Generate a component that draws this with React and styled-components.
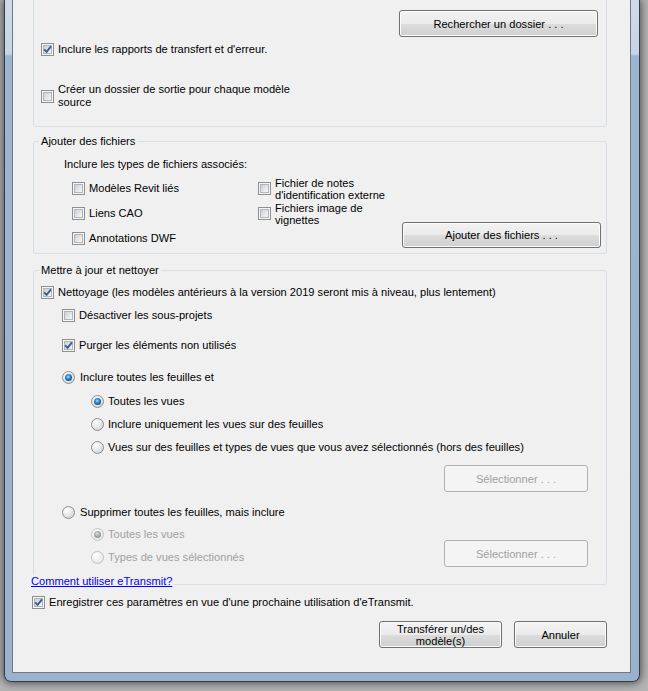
import React from 'react'
import styled, { createGlobalStyle } from 'styled-components'

const GlobalStyle = createGlobalStyle`
  html, body {
    margin: 0;
    padding: 0;
  }
  body {
    background: #b4b4b4;
    font-family: "Liberation Sans", Arial, sans-serif;
    font-size: 11.1px;
    color: #000;
  }
`;

const Page = styled.div`
  width: 648px;
  height: 691px;
  box-sizing: border-box;
  padding-left: 4px;
  overflow: hidden;
`;

const Window = styled.div`
  width: 636px;
  height: 682px;
  box-sizing: border-box;
  border: 1px solid #343d47;
  border-top: none;
  border-radius: 0 0 7px 7px;
  padding: 0 8px 8px 7px;
  background: linear-gradient(#cfdbe9 0, #c6d4e5 54px, #9cb4d0 56px, #9ab2ce 100%);
  box-shadow: 0 0 8px 1px rgba(0, 0, 0, 0.6);
`;

const Client = styled.div`
  height: 673px;
  box-sizing: border-box;
  border: 1px solid #6f7a86;
  border-top: none;
  background: #f0f0f0;
  padding: 0 23px 0 20px;
  display: flex;
  flex-direction: column;
`;

const TopGroup = styled.div`
  border: 1px solid #d5dfe5;
  border-top: none;
  border-radius: 0 0 3px 3px;
  padding: 0 8px 17px 7px;
  display: flex;
  flex-direction: column;
`;

const Group = styled.fieldset`
  margin: ${p => p.$top}px 0 0;
  padding: 0 ${p => p.$padRight || 0}px ${p => p.$padBottom}px 0;
  border: 1px solid #d5dfe5;
  border-radius: 3px;
  min-width: 0;
  display: flex;
  flex-direction: column;
`;

const Legend = styled.legend`
  margin-left: 5px;
  padding: 0 2px;
  line-height: 13px;
`;

const Caption = styled.div`
  margin: 10px 0 0 30px;
  line-height: 13px;
`;

const OptionRow = styled.div`
  display: flex;
  align-items: center;
  min-height: 13px;
  margin: ${p => p.$top || 0}px 0 0 ${p => p.$indent || 0}px;
  line-height: 13px;
`;

const OptionColumn = styled.div`
  display: flex;
  flex-direction: column;
  margin-left: ${p => p.$indent}px;
`;

const Text = styled.span`
  margin-left: ${p => p.$gap || 4}px;
  line-height: ${p => (p.$tight ? 12 : 13)}px;
  color: ${p => (p.$disabled ? '#a0a0a0' : '#000')};
  white-space: nowrap;
`;

const Box = styled.span`
  flex: none;
  position: relative;
  width: 13px;
  height: 13px;
  box-sizing: border-box;
  border: 1px solid #8e8f8f;
  background: #f6f6f6;
  &::before {
    content: "";
    position: absolute;
    inset: 1px;
    border: 1px solid #b0b5bb;
    background: linear-gradient(135deg, #cbcfd4 0%, #e6e8eb 60%, #f7f7f7 100%);
  }
  svg {
    position: absolute;
    left: 0;
    top: 0;
  }
`;

const RadioDot = styled.span`
  flex: none;
  position: relative;
  width: 13px;
  height: 13px;
  box-sizing: border-box;
  border-radius: 50%;
  border: 1px solid ${p => (p.$disabled ? '#bfc1c3' : '#8e8f8f')};
  background: ${p =>
    p.$disabled
      ? 'radial-gradient(circle at 35% 30%, #ffffff 0, #f0f0f0 50%, #e0e1e2 100%)'
      : 'radial-gradient(circle at 35% 30%, #ffffff 0, #e8e9ea 45%, #c6c9cc 100%)'};
  &::after {
    display: ${p => (p.$checked ? 'block' : 'none')};
    content: "";
    position: absolute;
    left: 2px;
    top: 2px;
    width: 7px;
    height: 7px;
    border-radius: 50%;
    background: ${p =>
      p.$disabled
        ? 'radial-gradient(circle at 45% 40%, #e0e0e0 0, #a3a3a3 50%, #7c7c7c 100%)'
        : 'radial-gradient(circle at 45% 40%, #a6e4ff 0, #2f8fd8 35%, #175285 70%, #0c2c4a 100%)'};
  }
`;

const ButtonRow = styled.div`
  display: flex;
  justify-content: flex-end;
  margin-top: ${p => p.$top}px;
  padding-right: ${p => p.$right || 0}px;
`;

const SplitRow = styled.div`
  display: flex;
  justify-content: space-between;
  margin-top: ${p => p.$top}px;
  padding-right: ${p => p.$right || 0}px;
`;

const Button = styled.button`
  flex: none;
  width: ${p => p.$w}px;
  height: ${p => p.$h}px;
  box-sizing: border-box;
  margin: ${p => p.$mt || 0}px 0 ${p => p.$mb || 0}px ${p => (p.$auto ? 'auto' : '0')};
  padding: 0;
  font: inherit;
  line-height: 12px;
  color: #000;
  border: 1px solid #707070;
  border-radius: 3px;
  background: linear-gradient(#f2f2f2 0%, #ebebeb 50%, #dddddd 50%, #cfcfcf 100%);
  box-shadow: inset 0 0 0 1px #fcfcfc;
  &:disabled {
    border-color: #adb2b5;
    background: #f4f4f4;
    color: #a0a0a0;
    box-shadow: none;
  }
`;

const FilesRow = styled.div`
  display: flex;
  align-items: flex-end;
  margin-top: 5px;
`;

const FileGrid = styled.div`
  display: grid;
  grid-auto-flow: column;
  grid-template-rows: repeat(3, 25px);
  grid-template-columns: 186px auto;
  margin-left: 38px;
`;

const FileCell = styled.div`
  display: flex;
  align-items: center;
`;

const HelpLink = styled.a`
  align-self: flex-start;
  position: relative;
  margin: -10px 0 0 -2px;
  padding-right: 2px;
  line-height: 13px;
  color: #0000ff;
  text-decoration: underline;
  background: #f0f0f0;
  cursor: pointer;
`;

const Footer = styled.div`
  display: flex;
  justify-content: flex-end;
  gap: 12px;
  margin-top: 12px;
`;

const Checkbox = ({ checked }) => (
  <Box>
    {checked && (
      <svg width="11" height="11" viewBox="0 0 11 11">
        <path d="M2.2 5.4 L4.6 7.9 L9 2.3" fill="none" stroke="#3c5b91" strokeWidth="1.9" />
      </svg>
    )}
  </Box>
);

const Radio = ({ checked, disabled }) => <RadioDot $checked={checked} $disabled={disabled} />;

const App = () => {
  return (
    <>
      <GlobalStyle />
      <Page>
        <Window>
          <Client>
            <TopGroup>
              <ButtonRow $top={10}>
                <Button $w={199} $h={27}>Rechercher un dossier . . .</Button>
              </ButtonRow>
              <OptionRow $top={6}>
                <Checkbox checked />
                <Text>Inclure les rapports de transfert et d'erreur.</Text>
              </OptionRow>
              <OptionRow $top={27}>
                <Checkbox />
                <Text>Créer un dossier de sortie pour chaque modèle<br />source</Text>
              </OptionRow>
            </TopGroup>

            <Group $top={8} $padRight={5} $padBottom={2}>
              <Legend>Ajouter des fichiers</Legend>
              <Caption>Inclure les types de fichiers associés:</Caption>
              <FilesRow>
                <FileGrid>
                  <FileCell><Checkbox /><Text>Modèles Revit liés</Text></FileCell>
                  <FileCell><Checkbox /><Text>Liens CAO</Text></FileCell>
                  <FileCell><Checkbox /><Text>Annotations DWF</Text></FileCell>
                  <FileCell><Checkbox /><Text $tight>Fichier de notes<br />d'identification externe</Text></FileCell>
                  <FileCell><Checkbox /><Text $tight>Fichiers image de<br />vignettes</Text></FileCell>
                </FileGrid>
                <Button $w={199} $h={26} $mb={3} $auto>Ajouter des fichiers . . .</Button>
              </FilesRow>
            </Group>

            <Group $top={10} $padBottom={17}>
              <Legend>Mettre à jour et nettoyer</Legend>
              <OptionRow $top={9} $indent={7}>
                <Checkbox checked />
                <Text>Nettoyage (les modèles antérieurs à la version 2019 seront mis à niveau, plus lentement)</Text>
              </OptionRow>
              <OptionRow $top={10} $indent={28}>
                <Checkbox />
                <Text>Désactiver les sous-projets</Text>
              </OptionRow>
              <OptionRow $top={17} $indent={28}>
                <Checkbox checked />
                <Text>Purger les éléments non utilisés</Text>
              </OptionRow>
              <OptionRow $top={19} $indent={28}>
                <Radio checked />
                <Text $gap={5}>Inclure toutes les feuilles et</Text>
              </OptionRow>
              <OptionRow $top={11} $indent={57}>
                <Radio checked />
                <Text $gap={4}>Toutes les vues</Text>
              </OptionRow>
              <OptionRow $top={10} $indent={57}>
                <Radio />
                <Text $gap={4}>Inclure uniquement les vues sur des feuilles</Text>
              </OptionRow>
              <OptionRow $top={10} $indent={57}>
                <Radio />
                <Text $gap={4}>Vues sur des feuilles et types de vues que vous avez sélectionnés (hors des feuilles)</Text>
              </OptionRow>
              <ButtonRow $top={11} $right={18}>
                <Button $w={144} $h={27} disabled>Sélectionner . . .</Button>
              </ButtonRow>
              <OptionRow $top={14} $indent={28}>
                <Radio />
                <Text $gap={5}>Supprimer toutes les feuilles, mais inclure</Text>
              </OptionRow>
              <SplitRow $top={9} $right={18}>
                <OptionColumn $indent={57}>
                  <OptionRow>
                    <Radio checked disabled />
                    <Text $gap={4} $disabled>Toutes les vues</Text>
                  </OptionRow>
                  <OptionRow $top={10}>
                    <Radio disabled />
                    <Text $gap={4} $disabled>Types de vues sélectionnés</Text>
                  </OptionRow>
                </OptionColumn>
                <Button $w={144} $h={27} $mt={12} disabled>Sélectionner . . .</Button>
              </SplitRow>
            </Group>

            <HelpLink>Comment utiliser eTransmit?</HelpLink>
            <OptionRow $top={8} $indent={-1}>
              <Checkbox checked />
              <Text>Enregistrer ces paramètres en vue d'une prochaine utilisation d'eTransmit.</Text>
            </OptionRow>
            <Footer>
              <Button $w={123} $h={27}>Transférer un/des<br />modèle(s)</Button>
              <Button $w={93} $h={27}>Annuler</Button>
            </Footer>
          </Client>
        </Window>
      </Page>
    </>
  )
}

export default App
